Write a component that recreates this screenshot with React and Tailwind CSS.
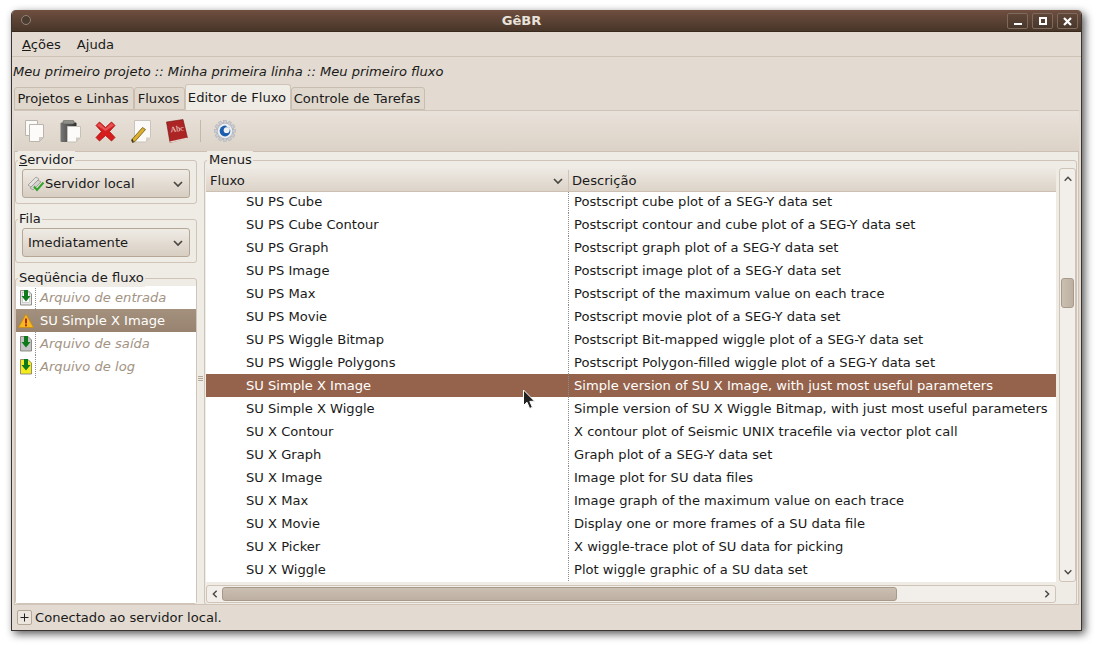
import React from 'react';

const rows = [
  ['SU PS Cube', 'Postscript cube plot of a SEG-Y data set'],
  ['SU PS Cube Contour', 'Postscript contour and cube plot of a SEG-Y data set'],
  ['SU PS Graph', 'Postscript graph plot of a SEG-Y data set'],
  ['SU PS Image', 'Postscript image plot of a SEG-Y data set'],
  ['SU PS Max', 'Postscript of the maximum value on each trace'],
  ['SU PS Movie', 'Postscript movie plot of a SEG-Y data set'],
  ['SU PS Wiggle Bitmap', 'Postscript Bit-mapped wiggle plot of a SEG-Y data set'],
  ['SU PS Wiggle Polygons', 'Postscript Polygon-filled wiggle plot of a SEG-Y data set'],
  ['SU Simple X Image', 'Simple version of SU X Image, with just most useful parameters', true],
  ['SU Simple X Wiggle', 'Simple version of SU X Wiggle Bitmap, with just most useful parameters'],
  ['SU X Contour', 'X contour plot of Seismic UNIX tracefile via vector plot call'],
  ['SU X Graph', 'Graph plot of a SEG-Y data set'],
  ['SU X Image', 'Image plot for SU data files'],
  ['SU X Max', 'Image graph of the maximum value on each trace'],
  ['SU X Movie', 'Display one or more frames of a SU data file'],
  ['SU X Picker', 'X wiggle-trace plot of SU data for picking'],
  ['SU X Wiggle', 'Plot wiggle graphic of a SU data set'],
];

const Chevron = ({ dir = 'down', className = '', size = 12 }) => {
  const d = {
    down: 'M2 4 L6 8 L10 4',
    up: 'M2 8 L6 4 L10 8',
    left: 'M8 2 L4 6 L8 10',
    right: 'M4 2 L8 6 L4 10',
  }[dir];
  return (
    <svg width={size} height={size} viewBox="0 0 12 12" className={className}>
      <path d={d} fill="none" stroke="#4a4640" strokeWidth="1.7" />
    </svg>
  );
};

const CopyIcon = () => (
  <svg width="21" height="23" viewBox="0 0 21 23">
    <path d="M1.5 0.5 h12 v15 h-12 z" fill="#fbfaf8" stroke="#b9b4ac" />
    <path d="M5.5 4.5 h14 v13 l-4 4 h-10 z" fill="#fcfbfa" stroke="#b9b4ac" />
    <path d="M15.5 21.5 l4-4 h-4 z" fill="#d0cbc3" stroke="#b9b4ac" strokeWidth="0.6" />
  </svg>
);

const PasteIcon = () => (
  <svg width="21" height="23" viewBox="0 0 21 23">
    <defs>
      <linearGradient id="clip" x1="0" x2="1" y1="0" y2="0">
        <stop offset="0" stopColor="#777" />
        <stop offset="1" stopColor="#2e2e2e" />
      </linearGradient>
    </defs>
    <rect x="0.5" y="2.5" width="16" height="19.5" rx="1" fill="url(#clip)" />
    <rect x="3" y="0.5" width="11" height="3.5" rx="1" fill="#8f8f88" stroke="#555" strokeWidth="0.5" />
    <path d="M7.5 6.5 h13 v11 l-4.5 4.5 h-8.5 z" fill="#fcfbfa" stroke="#c5c0b8" />
    <path d="M16 22 l4.5-4.5 h-4.5 z" fill="#cfcac2" />
  </svg>
);

const DeleteIcon = () => (
  <svg width="21" height="21" viewBox="0 0 21 21">
    <path
      d="M4.5 1 L10.5 6.5 L16.5 1 L20 4.5 L14.5 10.5 L20 16.5 L16.5 20 L10.5 14.5 L4.5 20 L1 16.5 L6.5 10.5 L1 4.5 Z"
      fill="#d61c1c"
      stroke="#a81515"
      strokeWidth="0.8"
    />
    <path d="M4.5 2 L10.5 7.5 L16.5 2 L19 4.5 L10.5 10 L2 4.5 Z" fill="#ee6a6a" opacity="0.7" />
  </svg>
);

const EditIcon = () => (
  <svg width="20" height="23" viewBox="0 0 20 23">
    <path d="M3.5 0.5 h16 v17 l-4.5 4.5 h-11.5 z" fill="#fbfaf8" stroke="#c8c3bb" />
    <path d="M15 22 l4.5-4.5 h-4.5 z" fill="#d5d0c8" />
    <path d="M0.5 20 L1.5 22.5 L4 21.5 L14.5 9.5 L11.5 7.5 Z" fill="#dcb02c" stroke="#6b5516" strokeWidth="0.8" />
    <path d="M0.5 20 L1.5 22.5 L2.8 22 L1.5 18.8 Z" fill="#333" />
  </svg>
);

const BookIcon = () => (
  <svg width="22" height="24" viewBox="0 0 22 24">
    <path d="M0.5 3 L17 0.5 L21.5 19 L4 23.5 Z" fill="#ac2524" stroke="#74100f" strokeWidth="0.6" />
    <path d="M3.5 22.5 L21.5 18.5 L21.5 20 L4.5 23.8 Z" fill="#e4d8d0" />
    <text x="4.5" y="12.5" fontSize="8" fontFamily="'Liberation Serif', serif" fill="#f6e4e0" transform="rotate(-7 10 10)">
      Abc
    </text>
  </svg>
);

const GearIcon = () => (
  <svg width="22" height="22" viewBox="0 0 22 22">
    <g fill="#c9ccd0" stroke="#a4a8ad" strokeWidth="0.4">
      <circle cx="11" cy="11" r="8.8" />
      {[0, 30, 60, 90, 120, 150, 180, 210, 240, 270, 300, 330].map((a) => (
        <rect key={a} x="9.5" y="0.3" width="3" height="3.4" transform={`rotate(${a} 11 11)`} />
      ))}
    </g>
    <circle cx="11" cy="11" r="7.2" fill="#eef0f2" />
    <circle cx="11" cy="11" r="5.4" fill="#1b5fae" />
    <circle cx="12.6" cy="10.2" r="2.9" fill="#eef0f2" />
    <path d="M12.6 7.3 a2.9 2.9 0 0 1 2.9 2.9 l1 -0.2 a5.4 5.4 0 0 0 -4 -4.3 z" fill="#eef0f2" />
  </svg>
);

const ServerIcon = () => (
  <svg width="18" height="16" viewBox="0 0 18 16">
    <path d="M1 9 L9 1 L12 3 L4 11 Z" fill="#e4e2de" stroke="#908c86" strokeWidth="0.7" />
    <path d="M3 12 L11 4 L14 6 L6 14 Z" fill="#d4d2ce" stroke="#908c86" strokeWidth="0.7" />
    <path d="M7 10.5 L10 14 L16.5 6.5" fill="none" stroke="#2fa52a" strokeWidth="2" />
  </svg>
);

const WarnIcon = () => (
  <svg width="16" height="16" viewBox="0 0 16 16">
    <path d="M8 1 L15.5 14.5 H0.5 Z" fill="#f5b81f" stroke="#c98a10" strokeWidth="0.8" strokeLinejoin="round" />
    <rect x="7" y="5.5" width="2" height="5" fill="#b3261a" />
    <rect x="7" y="11.3" width="2" height="2" fill="#b3261a" />
  </svg>
);

const FileArrow = ({ fill, inner }) => (
  <svg width="12" height="17" viewBox="0 0 12 17">
    <path d="M0.5 1.5 h7.5 l3.5 3.5 v11 h-11 z" fill={fill} stroke="#7a766e" strokeWidth="0.8" />
    {inner && <rect x="2.5" y="3.5" width="7" height="10" fill="#fff" stroke="#aaa" strokeWidth="0.5" />}
    <path d="M4 1 h4 v6 h2.5 L6 12.5 L1.5 7 H4 z" fill="#0d7a1c" />
  </svg>
);

const Cursor = () => (
  <svg width="16" height="22" viewBox="0 0 16 22">
    <path
      d="M1.5 1 L1.5 16.5 L5 13.2 L7.6 19.5 L10.4 18.3 L7.8 12.4 L12.6 12.2 Z"
      fill="#222"
      stroke="#fff"
      strokeWidth="1"
    />
  </svg>
);

const Combo = ({ icon, label }) => (
  <div className="flex h-[29px] items-center rounded-[3px] border border-[#b5a797] bg-gradient-to-b from-[#efebe5] to-[#d8cec2] pr-[5px] pl-[4px]">
    {icon}
    <span>{label}</span>
    <Chevron className="ml-auto" />
  </div>
);

// gtk frame with the label sitting on the top border
const Frame = ({ label, children, className = '' }) => (
  <div className={`relative rounded-[3px] border border-[#cfc4b7] ${className}`}>
    <span className="absolute -top-[10px] left-[2px] bg-[#efebe5] px-[1px] leading-[18px]">{label}</span>
    {children}
  </div>
);

const Tab = ({ children, active, className = '' }) => (
  <div
    className={
      active
        ? `flex h-[26px] items-center justify-center rounded-t-[3px] border border-b-0 border-[#cfc4b7] bg-[#efebe5] pr-[2px] ${className}`
        : `flex h-[23px] items-center justify-center rounded-t-[3px] border border-[#c9bdaf] bg-[#e0d8cd] pr-[2px] ${className}`
    }
  >
    {children}
  </div>
);

const SeqRow = ({ icon, label, selected }) => (
  <div
    className={
      selected
        ? 'flex h-[23px] items-center bg-gradient-to-b from-[#a4917d] to-[#97836f] text-white'
        : 'flex h-[23px] items-center italic text-[#a39383]'
    }
  >
    <div className="flex w-[20px] items-center justify-center self-stretch border-r border-dotted border-[#8d8d8d]">{icon}</div>
    <span className="pl-[4px]">{label}</span>
  </div>
);

export default function App() {
  return (
    <div className="h-[648px] w-[1100px] overflow-hidden bg-white pt-[10px] pl-[11px] font-['DejaVu_Sans',sans-serif] text-[13.1px] text-[#1a1a1a]">
      <div className="flex h-[621px] w-[1071px] flex-col overflow-hidden rounded-t-[5px] border border-t-0 border-[#3a3530] bg-[#e3dbd1] shadow-[3px_3px_9px_rgba(0,0,0,0.65)]">
        {/* title bar */}
        <div className="relative flex h-[22px] shrink-0 items-center justify-center border-b border-[#38291f] bg-gradient-to-b from-[#6f4f40] to-[#483629] pr-[50px] font-bold text-[#e8e2da]">
          <div className="absolute top-[5px] left-[9px] h-[10px] w-[10px] rounded-full border border-[#8f8479] bg-[#4c3c30]" />
          GêBR
          <div className="absolute top-[3px] right-[3px] flex gap-[4px]">
            {['min', 'max', 'close'].map((b) => (
              <div key={b} className="flex h-[16px] w-[21px] items-center justify-center rounded-[2px] border border-[#7e6a5c] bg-gradient-to-b from-[#5e4638] to-[#4a382c]">
                {b === 'min' && <div className="mt-[6px] h-[2px] w-[8px] bg-white" />}
                {b === 'max' && <div className="h-[8px] w-[8px] border-2 border-white" />}
                {b === 'close' && (
                  <svg width="9" height="9" viewBox="0 0 9 9">
                    <path d="M1 1 L8 8 M8 1 L1 8" stroke="#fff" strokeWidth="2.2" />
                  </svg>
                )}
              </div>
            ))}
          </div>
        </div>

        {/* menu bar */}
        <div className="flex h-[25px] shrink-0 items-center gap-[16px] border-b border-[#cfc3b6] pt-[2px] pl-[10px]">
          <span><span className="underline">A</span>ções</span>
          <span>A<span className="underline">j</span>uda</span>
        </div>

        <div className="flex h-[27px] shrink-0 items-center pt-[2px] pl-[1px] italic">
          Meu primeiro projeto :: Minha primeira linha :: Meu primeiro fluxo
        </div>

        {/* tabs */}
        <div className="flex h-[26px] shrink-0 items-end pl-[2px]">
          <Tab className="w-[120px]">Projetos e Linhas</Tab>
          <Tab className="w-[51px]">Fluxos</Tab>
          <Tab active className="w-[106px]">Editor de Fluxo</Tab>
          <Tab className="w-[134px]">Controle de Tarefas</Tab>
        </div>

        <div className="mx-[2px] flex min-h-0 flex-1 flex-col border-t border-[#cfc4b7]">
          {/* toolbar */}
          <div className="flex h-[41px] shrink-0 items-center border-b border-[#cdbfb1] bg-gradient-to-b from-[#e9e2da] to-[#dcd2c7] pl-[10px]">
            <div className="w-[36px]"><CopyIcon /></div>
            <div className="w-[35px]"><PasteIcon /></div>
            <div className="w-[36px]"><DeleteIcon /></div>
            <div className="w-[35px]"><EditIcon /></div>
            <div className="w-[34px]"><BookIcon /></div>
            <div className="h-[22px] w-px bg-[#c5b8a9]" />
            <div className="pl-[13px]"><GearIcon /></div>
          </div>

          {/* panes */}
          <div className="flex min-h-0 flex-1 border-x border-b border-[#cfc4b7] bg-[#efebe5]">
            <div className="flex w-[182px] shrink-0 flex-col pt-[8px]">
              <Frame label={<span><span className="underline">S</span>ervidor</span>} className="h-[44px]">
                <div className="absolute top-[8px] right-[6px] left-[6px]">
                  <Combo icon={<ServerIcon />} label="Servidor local" />
                </div>
              </Frame>
              <Frame label="Fila" className="mt-[15px] h-[44px]">
                <div className="absolute top-[8px] right-[6px] left-[6px]">
                  <Combo label={<span className="pl-[1px]">Imediatamente</span>} />
                </div>
              </Frame>
              <Frame label="Seqüência de fluxo" className="mt-[15px] flex-1 pt-[7px]">
                <div className="h-full bg-white">
                  <SeqRow label="Arquivo de entrada" icon={<FileArrow fill="#e8e8e8" inner />} />
                  <SeqRow selected label="SU Simple X Image" icon={<WarnIcon />} />
                  <SeqRow label="Arquivo de saída" icon={<FileArrow fill="#c4c4c4" />} />
                  <SeqRow label="Arquivo de log" icon={<FileArrow fill="#f5ea1a" />} />
                </div>
              </Frame>
            </div>

            {/* pane handle */}
            <div className="flex w-[7px] shrink-0 flex-col items-center justify-center gap-[1px]">
              <div className="h-px w-[5px] bg-[#b5a797]" />
              <div className="h-px w-[5px] bg-[#b5a797]" />
              <div className="h-px w-[5px] bg-[#b5a797]" />
            </div>

            <div className="min-w-0 flex-1 pt-[8px] pr-[1px]">
              <Frame label={<span className="pl-[1px]">Menus</span>} className="h-[445px] pt-[7px] pl-[1px]">
                <div className="flex">
                  <div className="w-[850px]">
                    <div className="flex h-[24px] items-center border-b border-[#cdbfb1] bg-gradient-to-b from-[#eeeae4] to-[#dcd3c8] pt-[2px]">
                      <div className="flex h-full w-[363px] items-center justify-between border-r border-[#cfc4b7] pr-[4px] pl-[4px]">
                        Fluxo
                        <Chevron />
                      </div>
                      <div className="pl-[3px]">Descrição</div>
                    </div>
                    <div className="relative h-[390px] overflow-hidden bg-white">
                      <div className="-mt-[2px]">
                        {rows.map(([name, desc, sel]) => (
                          <div key={name} className={sel ? 'flex h-[23px] items-center bg-[#95634c] text-white' : 'flex h-[23px] items-center'}>
                            <div className="flex h-full w-[363px] items-center border-r border-dotted border-[#8d8d8d] pl-[40px]">{name}</div>
                            <div className="whitespace-nowrap pl-[5px]">{desc}</div>
                          </div>
                        ))}
                      </div>
                      {/* mouse pointer */}
                      <div className="absolute top-[197px] left-[316px]"><Cursor /></div>
                    </div>
                  </div>
                  {/* vertical scrollbar */}
                  <div className="ml-[3px] flex h-[414px] w-[17px] flex-col rounded-[3px] border border-[#cfc4b7] bg-[#f2eeea]">
                    <div className="flex h-[19px] items-center justify-center"><Chevron dir="up" size={10} /></div>
                    <div className="mx-[1px] mt-[90px] h-[30px] rounded-[3px] border border-[#a89a8b] bg-gradient-to-r from-[#cbbfb2] to-[#bdb0a2]" />
                    <div className="mt-auto flex h-[19px] items-center justify-center"><Chevron size={10} /></div>
                  </div>
                </div>
                {/* horizontal scrollbar */}
                <div className="mt-[3px] flex h-[18px] w-[850px] items-center rounded-[3px] border border-[#cfc4b7] bg-[#f2eeea]">
                  <div className="flex w-[15px] justify-center"><Chevron dir="left" size={10} /></div>
                  <div className="h-[14px] w-[675px] rounded-[3px] border border-[#a89a8b] bg-gradient-to-b from-[#cbbfb2] to-[#bdb0a2]" />
                  <div className="ml-auto flex w-[17px] justify-center"><Chevron dir="right" size={10} /></div>
                </div>
              </Frame>
            </div>
          </div>

          {/* status bar */}
          <div className="flex h-[25px] shrink-0 items-center pl-[3px]">
            <div className="flex h-[15px] w-[15px] items-center justify-center rounded-[2px] border border-[#b5a797] bg-[#ece6de]">
              <svg width="9" height="9" viewBox="0 0 9 9">
                <path d="M4.5 0.5 V8.5 M0.5 4.5 H8.5" stroke="#222" strokeWidth="1" />
              </svg>
            </div>
            <span className="pl-[3px]">Conectado ao servidor local.</span>
          </div>
        </div>
      </div>
    </div>
  );
}
